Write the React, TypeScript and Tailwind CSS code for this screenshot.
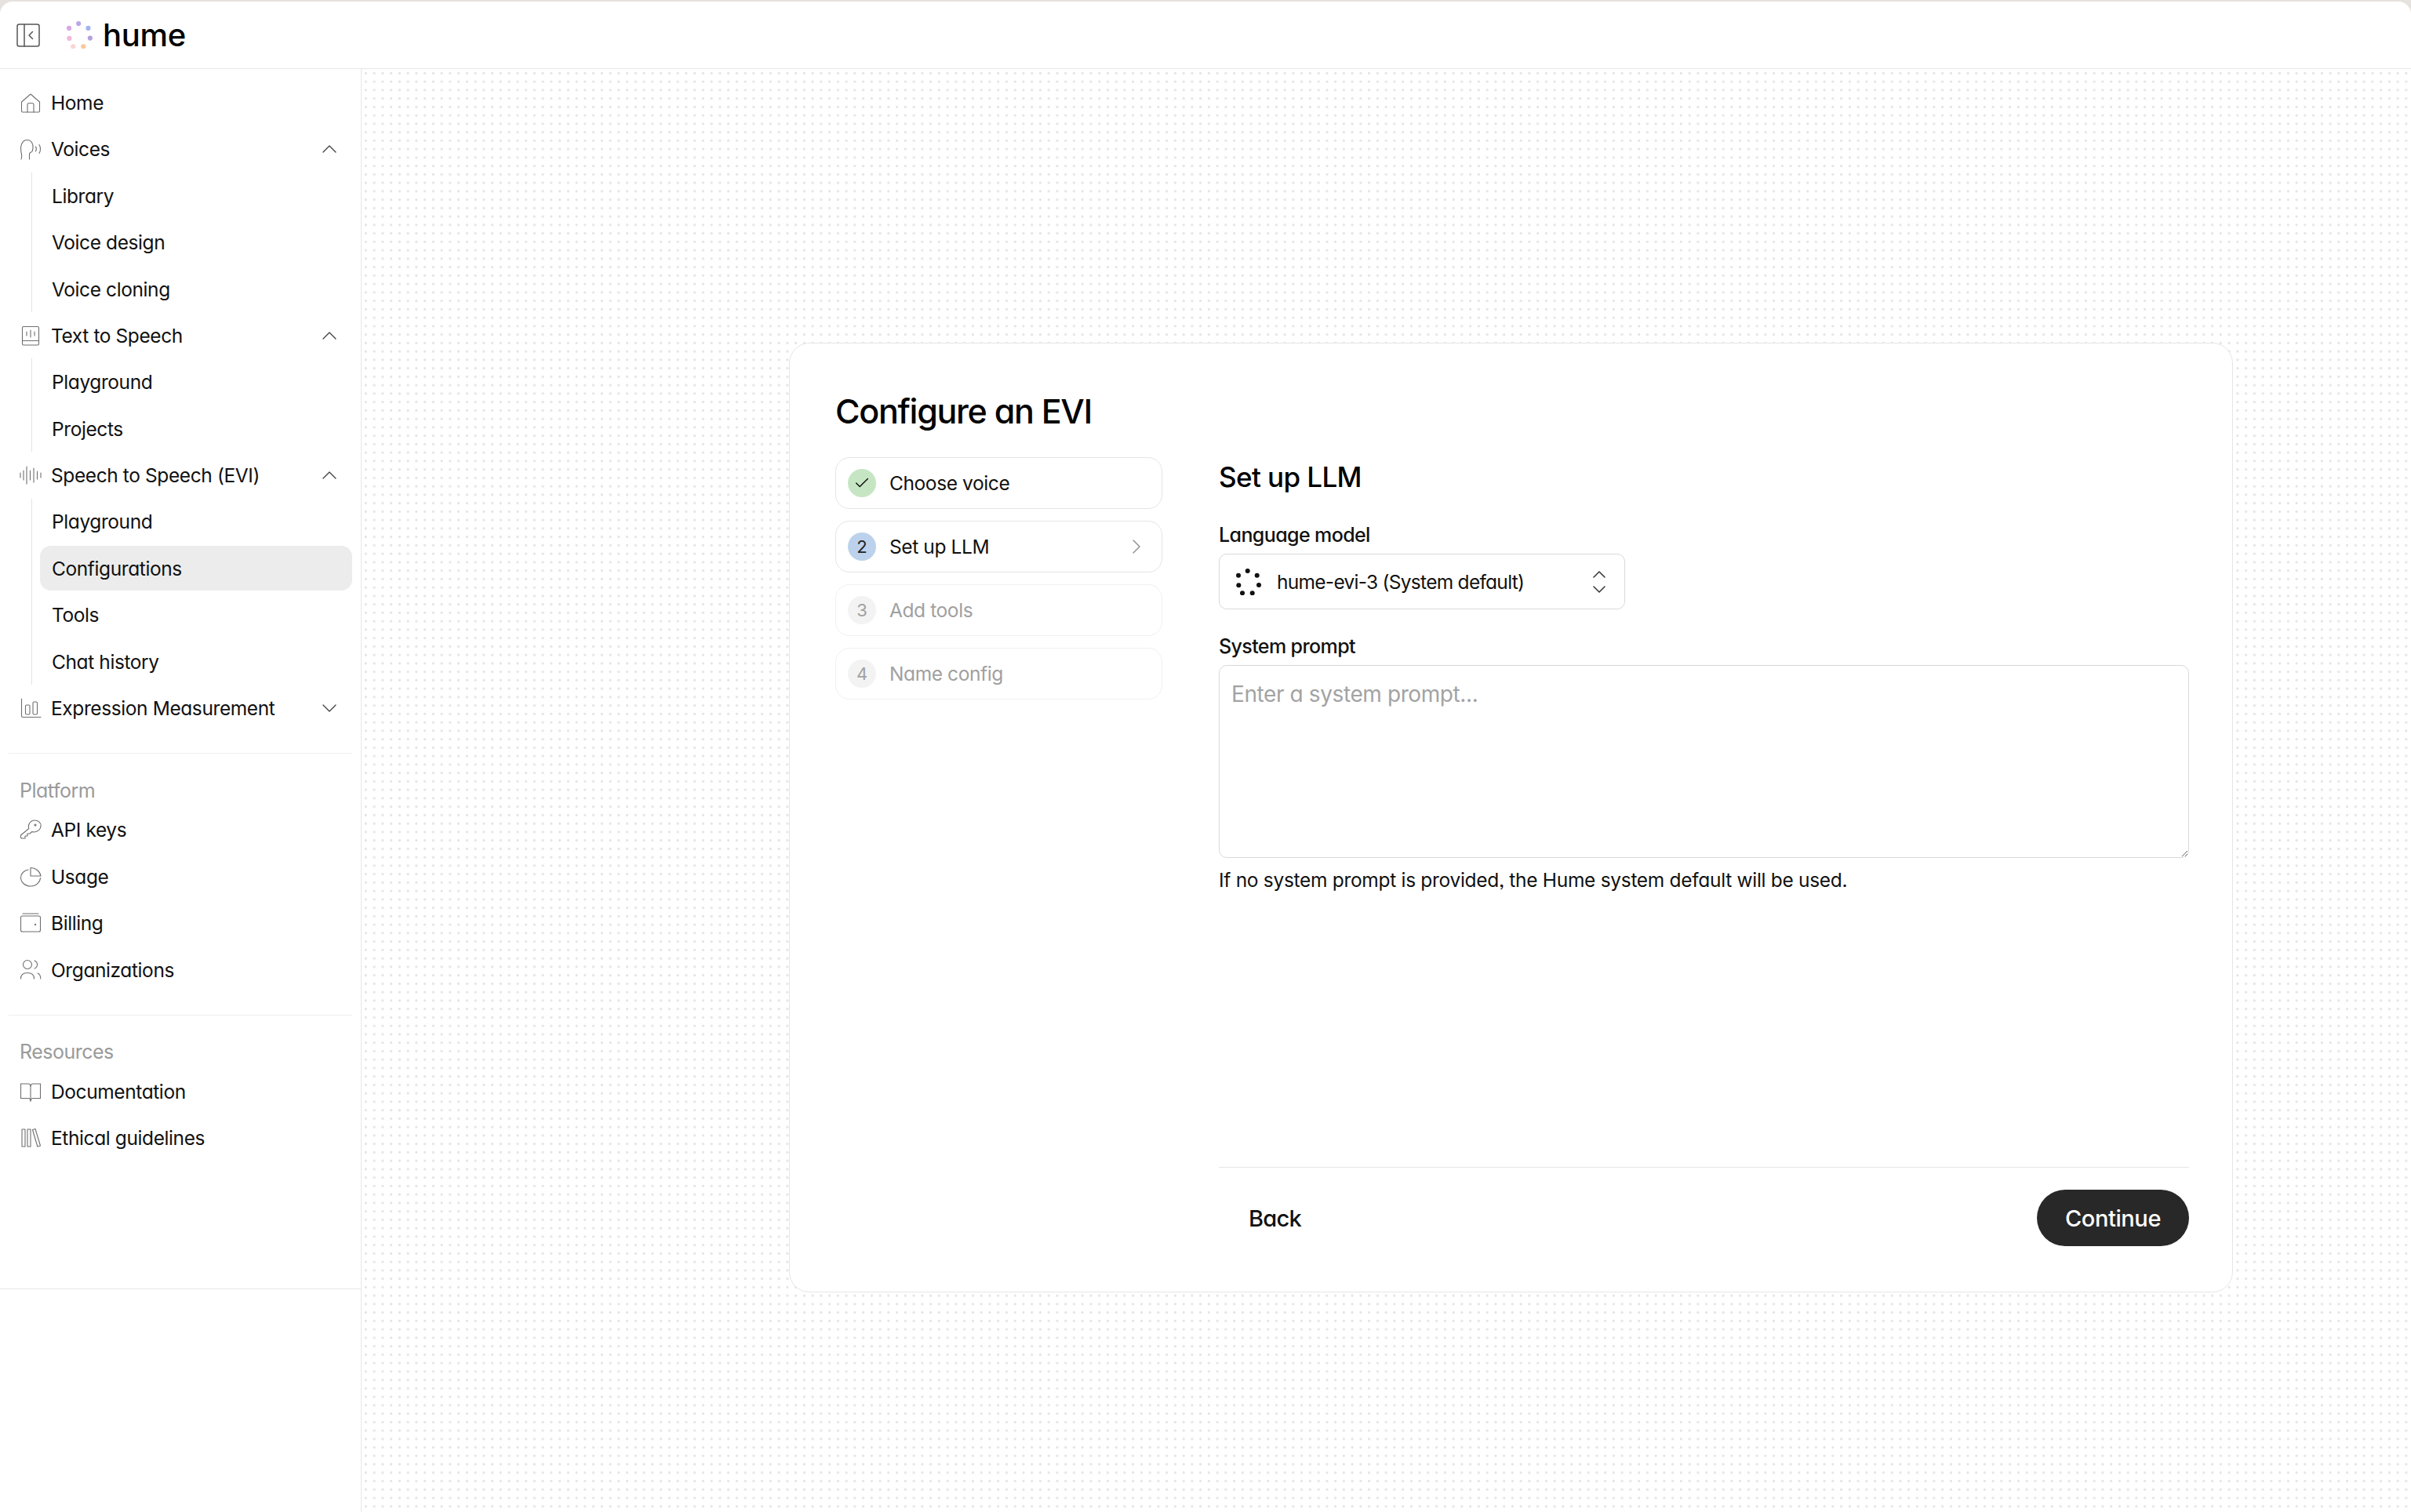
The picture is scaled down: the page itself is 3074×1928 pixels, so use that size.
import React from 'react';
import { ChevronDown, ChevronRight, ChevronUp, Check } from 'lucide-react';

const FONT = "font-['Inter','Liberation_Sans',sans-serif] [font-feature-settings:'cv11','ss03']";

const ic = { fill: 'none', stroke: '#6f6f6f', strokeWidth: 1.1, strokeLinecap: 'round' as const, strokeLinejoin: 'round' as const };

const HumeDots: React.FC<{ colors: string[]; size: number }> = ({ colors, size }) => {
  const pts = [
    [14.7, 3], [26.7, 8.7], [29, 21], [20.7, 31.3], [8, 31.3], [3.300, 21.3], [3, 8.7],
  ];
  return (
    <svg width={size} height={size} viewBox="0 0 34 34">
      {pts.map((p, i) => (
        <circle key={i} cx={p[0]} cy={p[1]} r={3} fill={colors[i]} />
      ))}
    </svg>
  );
};

const icons: Record<string, React.ReactNode> = {
  home: (
    <svg width="28" height="28" viewBox="0 0 28 28" {...ic}>
      <path d="M2.500 13 14 3l11.500 10v11.500a1.500 1.500 0 0 1-1.500 1.500H4a1.500 1.500 0 0 1-1.500-1.500z" />
      <path d="M10 26V16.500a2 2 0 0 1 2-2h4a2 2 0 0 1 2 2V26" />
    </svg>
  ),
  voices: (
    <svg width="28" height="28" viewBox="0 0 28 28" {...ic}>
      <path d="M2 27c1.200-3 .8-6-.2-9.500C.3 11 3 2.500 9.500 2.500S17.500 9 17 12.500c-.2 1.500-.2 3-1 4.500-.8 1.200-2.200 1.200-3 2l-.5 1.500V27" />
      <path d="M20.500 11c1 1.500 1 4 0 6" />
      <path d="M25 8.500c2 3 2 8 0 11" />
    </svg>
  ),
  tts: (
    <svg width="28" height="28" viewBox="0 0 28 28" {...ic}>
      <rect x="3.500" y="2.500" width="21" height="23.500" rx="1.500" />
      <path d="M3.500 20.500h21" />
      <path d="M9 9v5M14 7v9M19 9v5" />
    </svg>
  ),
  evi: (
    <svg width="28" height="28" viewBox="0 0 28 28" {...ic}>
      <path d="M1 11v6M5 8v12M9 3v22M13.500 8v12M18 5v18M22.500 9v10M27 11v6" />
    </svg>
  ),
  expr: (
    <svg width="28" height="28" viewBox="0 0 28 28" {...ic}>
      <path d="M2.500 2v22a1.500 1.500 0 0 0 1.500 1.500h23" />
      <rect x="7.500" y="10" width="5.500" height="12" rx="1.500" />
      <rect x="17" y="6" width="5.500" height="16" rx="1.500" />
    </svg>
  ),
  key: (
    <svg width="28" height="28" viewBox="0 0 28 28" {...ic}>
      <path d="M27 9c0 4.500-3.800 8-8.500 8-1 0-2-.2-2.800-.5L13 19h-3v3H7v3H2.500l-1-1v-3l10.300-8.500c-.3-.8-.5-1.700-.5-2.500 0-4.500 3.500-8 8-8s8 3.500 8 7z" />
      <circle cx="20" cy="8" r="1" />
    </svg>
  ),
  usage: (
    <svg width="28" height="28" viewBox="0 0 28 28" {...ic}>
      <path d="M11 5C5.500 6 1.500 10 1.500 15c0 6 5.500 11 12.500 11s12-5 12.500-10.500" />
      <path d="M14 2.500c6.500 0 12 4.500 13 10.500H14z" />
    </svg>
  ),
  billing: (
    <svg width="28" height="28" viewBox="0 0 28 28" {...ic}>
      <rect x="1.500" y="5" width="25" height="20" rx="2" />
      <path d="M4 2h20" />
      <circle cx="20" cy="16" r=".6" />
    </svg>
  ),
  orgs: (
    <svg width="28" height="28" viewBox="0 0 28 28" {...ic}>
      <circle cx="10" cy="8" r="5.500" />
      <path d="M1.500 26c0-5 3.500-7.500 8.500-7.500s8.500 2.500 8.500 7.500" />
      <path d="M19 3c2.500.8 3.500 3 3.500 5s-1 4-3.500 5" />
      <path d="M23 19c2.500 1 3.800 3.500 3.800 7" />
    </svg>
  ),
  docs: (
    <svg width="28" height="28" viewBox="0 0 28 28" {...ic}>
      <path d="M14 7c0-1.700-1.300-3-3-3H1.500v18.500H11c1.700 0 3 1 3 3.500" />
      <path d="M14 7c0-1.700 1.300-3 3-3h9.500v18.500H17c-1.700 0-3 1-3 3.500z" />
    </svg>
  ),
  ethics: (
    <svg width="28" height="28" viewBox="0 0 28 28" {...ic}>
      <path d="M3 3h4v22H3zM10 3h4v22h-4z" />
      <path d="m16.500 3.500 3.500-1 6.500 21.500-3.700 1z" />
    </svg>
  ),
};

const NavRow: React.FC<{ icon: string; label: string; chevron?: 'up' | 'down' }> = ({ icon, label, chevron }) => (
  <div className="h-[59.4px] flex items-center pl-[25px] pr-[24px]">
    <span className="w-[28px] h-[28px] shrink-0 mr-[12px]">{icons[icon]}</span>
    <span className="flex-1 pt-[1px] text-[24.5px] leading-none tracking-[-0.4px] text-[#111]">{label}</span>
    {chevron === 'up' && <ChevronUp size={32} strokeWidth={1} className="text-[#444]" />}
    {chevron === 'down' && <ChevronDown size={32} strokeWidth={1} className="text-[#444]" />}
  </div>
);

const SubList: React.FC<{ items: string[]; active?: string }> = ({ items, active }) => (
  <div className="ml-[40px] mr-[11px] border-l border-[#e3e3e3]">
    {items.map((item) => (
      <div key={item} className="h-[59.4px] flex items-center pl-[10px]">
        <div
          className={`w-full h-[57px] flex items-center pl-[15px] pt-[1px] rounded-[14px] text-[24.5px] leading-none tracking-[-0.4px] text-[#111] ${
            item === active ? 'bg-[#ececec]' : ''
          }`}
        >
          {item}
        </div>
      </div>
    ))}
  </div>
);

const Sidebar: React.FC = () => (
  <aside className="w-[461px] shrink-0 bg-white border-r border-[#e6e6e6]">
    <div className="h-[1556px] pt-[13px] border-b border-[#e6e6e6]">
      <NavRow icon="home" label="Home" />
      <NavRow icon="voices" label="Voices" chevron="up" />
      <SubList items={['Library', 'Voice design', 'Voice cloning']} />
      <NavRow icon="tts" label="Text to Speech" chevron="up" />
      <SubList items={['Playground', 'Projects']} />
      <NavRow icon="evi" label="Speech to Speech (EVI)" chevron="up" />
      <SubList items={['Playground', 'Configurations', 'Tools', 'Chat history']} active="Configurations" />
      <NavRow icon="expr" label="Expression Measurement" chevron="down" />

      <div className="mt-[28px] mx-[11px] border-t border-[#efefef]" />
      <div className="mt-[27px] h-[40px] flex items-center pl-[25px] text-[25px] tracking-[-0.5px] text-[#9a9a9a]">Platform</div>
      <NavRow icon="key" label="API keys" />
      <NavRow icon="usage" label="Usage" />
      <NavRow icon="billing" label="Billing" />
      <NavRow icon="orgs" label="Organizations" />

      <div className="mt-[28px] mx-[11px] border-t border-[#efefef]" />
      <div className="mt-[27px] h-[40px] flex items-center pl-[25px] text-[25px] tracking-[-0.5px] text-[#9a9a9a]">Resources</div>
      <NavRow icon="docs" label="Documentation" />
      <NavRow icon="ethics" label="Ethical guidelines" />
    </div>
  </aside>
);

const Step: React.FC<{ n: string; label: string; state: 'done' | 'current' | 'todo' }> = ({ n, label, state }) => (
  <div
    className={`h-[66px] flex items-center pl-[15px] pr-[16px] rounded-[18px] border ${
      state === 'todo' ? 'border-[#f0f0f0]' : 'border-[#e4e4e4]'
    }`}
  >
    <span
      className={`w-[36px] h-[36px] rounded-full flex items-center justify-center text-[22px] leading-none ${
        state === 'done'
          ? 'bg-[#c6e6c3] text-[#111]'
          : state === 'current'
            ? 'bg-[#bcd2ec] text-[#222]'
            : 'bg-[#f3f3f3] text-[#a0a0a0]'
      }`}
    >
      {state === 'done' ? <Check size={22} strokeWidth={1.6} /> : n}
    </span>
    <span className={`flex-1 ml-[17px] pt-[1px] text-[24.5px] leading-none tracking-[-0.4px] ${state === 'todo' ? 'text-[#a0a0a0]' : 'text-[#111]'}`}>
      {label}
    </span>
    {state === 'current' && <ChevronRight size={32} strokeWidth={1} className="text-[#8a8a8a]" />}
  </div>
);

export default function App() {
  return (
    <div className={`w-[3074px] h-[1928px] flex flex-col overflow-hidden bg-[#e6e2de] pt-[2px] ${FONT}`}>
      <header className="h-[86px] shrink-0 bg-white rounded-t-[16px] border-b border-[#e6e6e6] flex items-center pl-[21px]">
        <svg width="30" height="30" viewBox="0 0 30 30" fill="none" stroke="#555" strokeWidth="1.500" strokeLinecap="round" strokeLinejoin="round">
          <rect x="1" y="1" width="28" height="28" rx="2.500" />
          <path d="M10 1v28" />
          <path d="m20.500 10.500-4.500 4.500 4.500 4.500" />
        </svg>
        <span className="ml-[34px]">
          <HumeDots size={35} colors={['#b9a7e8', '#a5b4f0', '#b49fe0', '#fbc79a', '#fbd5d5', '#f2b8d8', '#d6a8e4']} />
        </span>
        <span className="ml-[11px] text-[40px] leading-none font-medium tracking-[-0.3px] text-black">hume</span>
      </header>

      <div className="flex-1 flex min-h-0">
        <Sidebar />
        <main className="flex-1 bg-white bg-[radial-gradient(circle,#e6e6e6_1.400px,transparent_1.700px)] bg-size-[10.750px_10.750px]">
          <section className="ml-[545px] mt-[349px] w-[1841px] h-[1211px] bg-white border border-[#e6e6e6] rounded-[26px] pl-[58px] pr-[55px] pt-[57px] flex flex-col">
            <h1 className="h-[58px] flex items-center text-[43px] leading-none font-medium tracking-[-1.3px] text-black">Configure an EVI</h1>
            <div className="flex-1 flex min-h-0 mt-[30px]">
              <div className="w-[417px] shrink-0 flex flex-col gap-[15px]">
                <Step n="1" label="Choose voice" state="done" />
                <Step n="2" label="Set up LLM" state="current" />
                <Step n="3" label="Add tools" state="todo" />
                <Step n="4" label="Name config" state="todo" />
              </div>

              <div className="flex-1 ml-[72px] flex flex-col">
                <h2 className="h-[50px] flex items-center text-[35px] leading-none font-medium tracking-[-0.6px] text-black">Set up LLM</h2>
                <label className="mt-[36px] h-[26px] flex items-center text-[25px] font-medium leading-none tracking-[-0.6px] text-[#111]">Language model</label>
                <div className="mt-[11px] w-[518px] h-[71px] border border-[#d9d9d9] rounded-[10px] flex items-center pl-[21px] pr-[19px]">
                  <HumeDots size={34} colors={['#111', '#111', '#111', '#111', '#111', '#111', '#111']} />
                  <span className="flex-1 ml-[18px] pt-[1px] text-[24.5px] leading-none tracking-[-0.72px] text-[#111]">hume-evi-3 (System default)</span>
                  <svg width="26" height="36" viewBox="0 0 26 36" fill="none" stroke="#333" strokeWidth="1.500" strokeLinecap="round" strokeLinejoin="round">
                    <path d="m6 12 7-7 7 7M6 24l7 7 7-7" />
                  </svg>
                </div>
                <label className="mt-[34px] h-[26px] flex items-center text-[25px] font-medium leading-none tracking-[-0.6px] text-[#111]">System prompt</label>
                <textarea
                  placeholder="Enter a system prompt..."
                  className="mt-[11px] w-full h-[246px] border border-[#d9d9d9] rounded-[10px] px-[15px] pt-[18px] pb-[14px] text-[28px] leading-[37px] tracking-[-0.4px] placeholder:text-[#a3a3a3] outline-none"
                />
                <p className="mt-[14px] text-[24.5px] leading-[28px] tracking-[-0.3px] text-[#111]">If no system prompt is provided, the Hume system default will be used.</p>
                <div className="mt-auto mb-[58px] border-t border-[#e6e6e6] pt-[28px] flex items-center justify-between">
                  <button className="pl-[38px] text-[29px] font-medium leading-none tracking-[-0.7px] text-[#111]">Back</button>
                  <button className="w-[194px] h-[72px] rounded-full bg-[#282828] text-white text-[29px] font-medium leading-none tracking-[-0.4px]">Continue</button>
                </div>
              </div>
            </div>
          </section>
        </main>
      </div>
    </div>
  );
}
